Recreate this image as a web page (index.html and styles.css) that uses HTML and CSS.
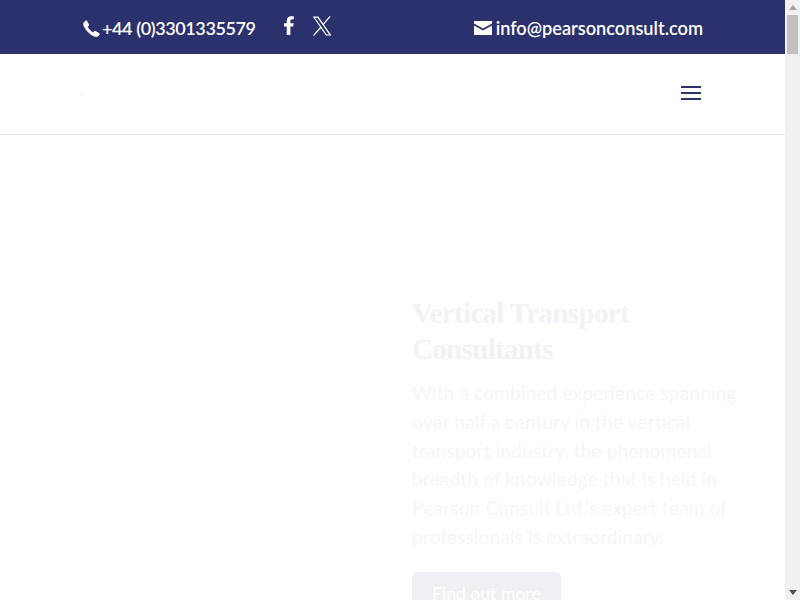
FILE: index.html
```html
<!DOCTYPE html>
<html lang="en">
<head>
    <meta charset="UTF-8">
    <meta name="viewport" content="width=device-width, initial-scale=1.0">
    <title>Pearson Consult</title>
    <link rel="stylesheet" href="styles.css">
</head>

<body>

    <div class="page">
        <!-- Top bar -->
        <div class="top-bar">
            <div class="top-left">
                <a class="top-link phone" href="#">
                    <svg viewBox="-0.5 -0.5 17 17" width="17" height="17"><path d="M3.2 0.6 L5.2 4.2 C5.4 4.6 5.2 5 4.9 5.3 L3.9 6.2 C4.8 8.4 7.4 11.2 9.6 12.2 L10.7 11 C11 10.7 11.4 10.6 11.8 10.8 L15.6 13 C15.9 13.2 16 13.6 15.8 13.9 C15 15.2 13.8 16 12.8 16 C8 16 0.4 8 0 3.4 C0 2.4 1 1.2 2.2 0.4 C2.6 0.2 3 0.2 3.2 0.6 Z"/></svg>
                    <span>+44 (0)3301335579</span>
                </a>
                <div class="socials">
                    <a href="#" class="social">
                        <svg viewBox="0 0 11 21" width="10" height="19"><path d="M3 21 V11.6 H0 V8 H3 V5.4 C3 2 5 0.2 7.9 0.2 C9.3 0.2 10.4 0.3 10.8 0.4 V3.6 H8.9 C7.4 3.6 7 4.4 7 5.5 V8 H10.6 L10.1 11.6 H7 V21 Z"/></svg>
                    </a>
                    <a href="#" class="social">
                        <svg viewBox="0 0 24 24" width="20" height="20"><path fill-rule="evenodd" d="M14.2 10.2 L22.6 0.5 H20.6 L13.4 8.9 L7.6 0.5 H0.9 L9.7 13.3 L0.9 23.5 H2.9 L10.6 14.6 L16.7 23.5 H23.4 Z M11.5 13.4 L10.6 12.1 L3.5 2 H6.6 L12.3 10.2 L13.2 11.5 L20.7 22.1 H17.7 Z"/></svg>
                    </a>
                </div>
            </div>
            <a class="top-link mail" href="#">
                <svg viewBox="0 0 18 14" width="18" height="14"><path d="M0 0 H18 V2.6 L9 7.6 L0 2.6 Z M0 4.6 L9 9.6 L18 4.6 V14 H0 Z"/></svg>
                <span>info@pearsonconsult.com</span>
            </a>
        </div>

        <!-- Main header -->
        <header class="main-header">
            <span class="logo-dot"></span>
            <button class="menu-btn" aria-label="Menu"><span></span><span></span><span></span></button>
        </header>

        <!-- Hero, still faded in -->
        <section class="hero">
            <h1>Vertical Transport Consultants</h1>
            <p>With a combined experience spanning over half a century in the vertical transport industry, the phenomenal breadth of knowledge that is held in Pearson Consult Ltd.’s expert team of professionals is extraordinary.</p>
            <a class="hero-btn" href="#">Find out more</a>
        </section>
    </div>

    <!-- Window scrollbar -->
    <div class="scrollbar">
        <span class="arrow-up"></span>
        <div class="track"><div class="thumb"></div></div>
        <span class="arrow-down"></span>
    </div>

</body>
</html>
```

FILE: styles.css
```css
:root {
    --navy: #2a316c;
    --faded-head: #f2f2f6;
    --faded-text: #f5f5f7;
}

html, body {
    margin: 0;
    padding: 0;
    height: 100%;
    overflow: hidden;
}

body {
    font-family: 'Lato', 'Liberation Sans', sans-serif;
    background: #fff;
    color: #666;
    display: flex;
}

a {
    text-decoration: none;
    color: inherit;
}

.page {
    flex: 1;
    min-width: 0;
    overflow: hidden;
}

/* Top bar */
.top-bar {
    height: 54px;
    box-sizing: border-box;
    padding: 0 82px 0 83px;
    background: var(--navy);
    color: #fff;
    display: flex;
    justify-content: space-between;
    align-items: center;
}

.top-left {
    display: flex;
    align-items: center;
}

.top-link {
    display: flex;
    align-items: center;
    font-size: 18px;
    font-weight: 600;
    line-height: 22px;
    margin-top: 2px;
}

.top-link svg {
    fill: #fff;
    flex: none;
}

.phone {
    gap: 2px;
    letter-spacing: -0.4px;
}

.phone svg {
    stroke: #fff;
    stroke-width: 0.8;
}

.mail {
    gap: 4px;
    font-size: 18.2px;
}

.socials {
    display: flex;
    align-items: center;
    gap: 18px;
    margin-left: 28px;
    margin-top: -3px;
}

.social {
    display: flex;
}

.social svg {
    fill: #fff;
}

/* Main header */
.main-header {
    height: 81px;
    box-sizing: border-box;
    padding: 0 84px 0 82px;
    border-bottom: 1px solid #e4e4e4;
    display: flex;
    justify-content: space-between;
    align-items: center;
}

.logo-dot {
    width: 1px;
    height: 1px;
    background: #bbb;
}

.menu-btn {
    width: 20px;
    padding: 0;
    border: 0;
    background: none;
    display: flex;
    flex-direction: column;
    gap: 4px;
    margin-top: -3px;
}

.menu-btn span {
    height: 2px;
    background: var(--navy);
}

/* Hero */
.hero {
    padding: 160px 48px 60px 412px;
}

.hero h1 {
    margin: 0 0 12px;
    font-family: 'Liberation Serif', serif;
    font-size: 29px;
    line-height: 36px;
    font-weight: 700;
    letter-spacing: -0.67px;
    color: var(--faded-head);
}

.hero p {
    margin: 0 0 20px;
    font-size: 19.4px;
    line-height: 28.8px;
    color: var(--faded-text);
}

.hero-btn {
    display: inline-block;
    padding: 7px 20px;
    border-radius: 6px;
    background: #efeff4;
    color: #fff;
    font-size: 17.6px;
    line-height: 29px;
}

/* Scrollbar */
.scrollbar {
    flex: none;
    width: 15px;
    background: #f1f1f1;
    display: flex;
    flex-direction: column;
    align-items: center;
}

.arrow-up,
.arrow-down {
    flex: none;
    width: 0;
    height: 0;
    margin: 5px 0;
    border-left: 4px solid transparent;
    border-right: 4px solid transparent;
}

.arrow-up {
    border-bottom: 5px solid #a3a3a3;
}

.arrow-down {
    border-top: 5px solid #505050;
}

.track {
    flex: 1;
    width: 11px;
}

.thumb {
    height: 39px;
    background: #c1c1c1;
}
```
